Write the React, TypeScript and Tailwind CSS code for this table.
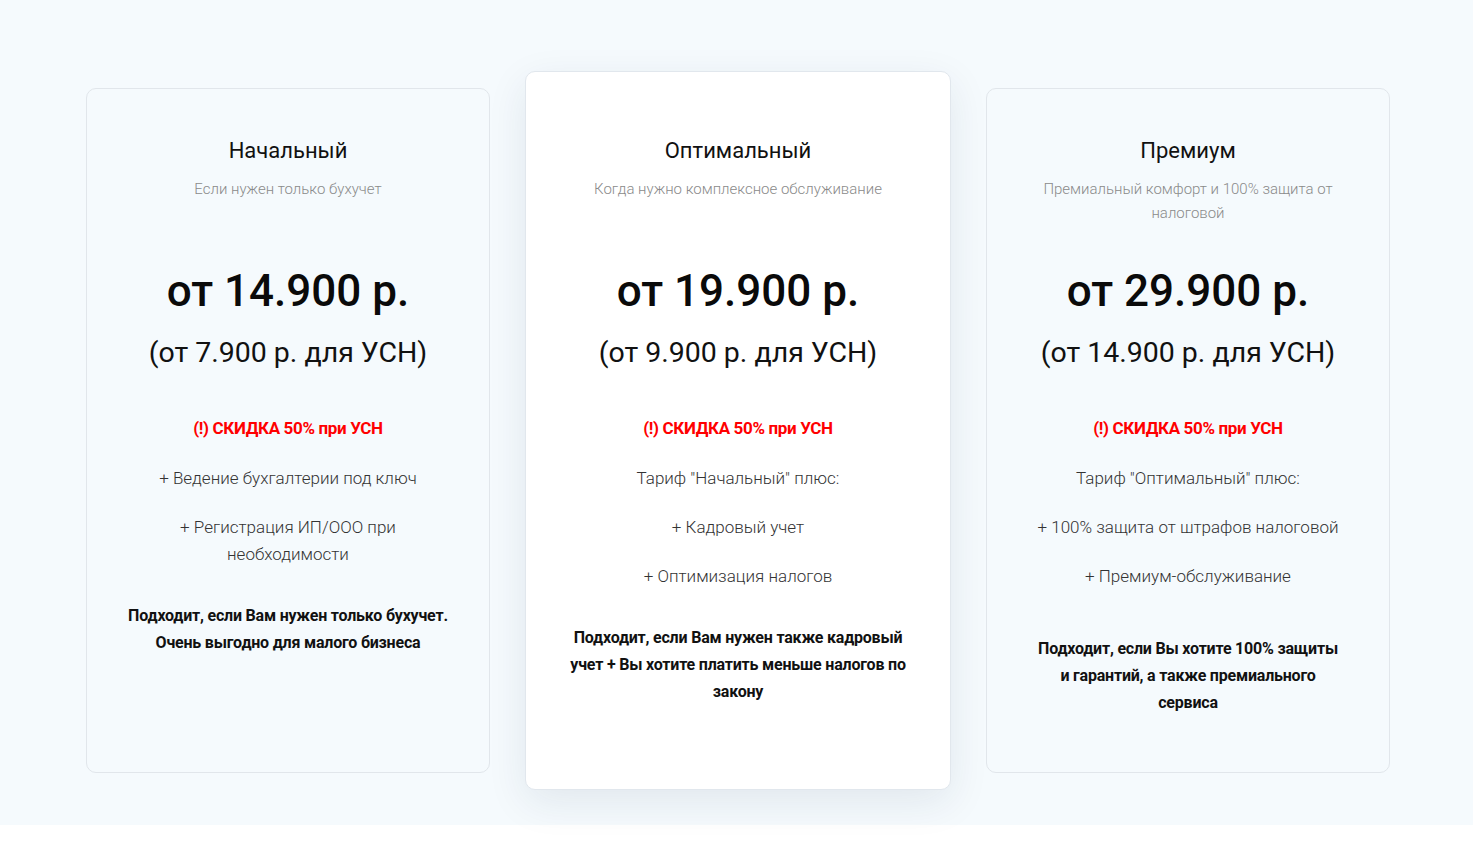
import React from "react";

type Plan = {
  title: string;
  subtitle: React.ReactNode;
  price: string;
  usn: string;
  features: React.ReactNode[];
  note: React.ReactNode;
  noteMt: string;
  featured?: boolean;
};

const plans: Plan[] = [
  {
    title: "Начальный",
    subtitle: "Если нужен только бухучет",
    price: "от 14.900 р.",
    usn: "(от 7.900 р. для УСН)",
    features: [
      "+ Ведение бухгалтерии под ключ",
      <>
        + Регистрация ИП/ООО при
        <br />
        необходимости
      </>,
    ],
    note: (
      <>
        Подходит, если Вам нужен только бухучет.
        <br />
        Очень выгодно для малого бизнеса
      </>
    ),
    noteMt: "mt-[34px]",
  },
  {
    title: "Оптимальный",
    subtitle: "Когда нужно комплексное обслуживание",
    price: "от 19.900 р.",
    usn: "(от 9.900 р. для УСН)",
    features: ['Тариф "Начальный" плюс:', "+ Кадровый учет", "+ Оптимизация налогов"],
    note: (
      <>
        Подходит, если Вам нужен также кадровый
        <br />
        учет + Вы хотите платить меньше налогов по
        <br />
        закону
      </>
    ),
    noteMt: "mt-[34px]",
    featured: true,
  },
  {
    title: "Премиум",
    subtitle: (
      <>
        Премиальный комфорт и 100% защита от
        <br />
        налоговой
      </>
    ),
    price: "от 29.900 р.",
    usn: "(от 14.900 р. для УСН)",
    features: ['Тариф "Оптимальный" плюс:', "+ 100% защита от штрафов налоговой", "+ Премиум-обслуживание"],
    note: (
      <>
        Подходит, если Вы хотите 100% защиты
        <br />
        и гарантий, а также премиального
        <br />
        сервиса
      </>
    ),
    noteMt: "mt-[45px]",
  },
];

function Card({ plan }: { plan: Plan }) {
  const base =
    "flex flex-col items-center text-center rounded-[10px] border whitespace-nowrap";
  const variant = plan.featured
    ? "w-[426px] h-[719px] pt-[64px] bg-white border-[#e1e7ed] shadow-[0_12px_40px_rgba(20,40,80,0.09)]"
    : "w-[404px] h-[685px] mt-[17px] pt-[47px] bg-[#f5fafd] border-[#e1e6eb]";
  return (
    <div className={`${base} ${variant}`}>
      <div className="h-[129px] flex flex-col items-center">
        <div className="text-[22px] leading-[30px] text-[#111]">{plan.title}</div>
        <div className="mt-[11px] text-[15px] leading-[24px] font-light text-[#8a8a8a]">
          {plan.subtitle}
        </div>
      </div>
      <div className="text-[44px] leading-[52px] font-medium text-[#0a0a0a]">{plan.price}</div>
      <div className="mt-[16px] text-[28.5px] leading-[40px] text-[#111]">{plan.usn}</div>
      <div className="mt-[43px] text-[17px] leading-[24px] font-bold text-[#ff0000] tracking-[-0.35px]">
        (!) СКИДКА 50% при УСН
      </div>
      <div className="mt-[25px] flex flex-col gap-[22px] text-[17px] leading-[27px] font-light text-[#333]">
        {plan.features.map((f, i) => (
          <div key={i}>{f}</div>
        ))}
      </div>
      <div
        className={`${plan.noteMt} text-[16px] leading-[27px] font-bold text-[#111] tracking-[-0.2px]`}
      >
        {plan.note}
      </div>
    </div>
  );
}

export default function App() {
  return (
    <div className="bg-white min-h-[843px]" style={{ fontFamily: "Roboto, 'Liberation Sans', sans-serif" }}>
      <div className="h-[825px] bg-[#f5fafd] pt-[71px] pl-[3px] flex justify-center items-start gap-[35px]">
        {plans.map((p) => (
          <Card key={p.title} plan={p} />
        ))}
      </div>
    </div>
  );
}
